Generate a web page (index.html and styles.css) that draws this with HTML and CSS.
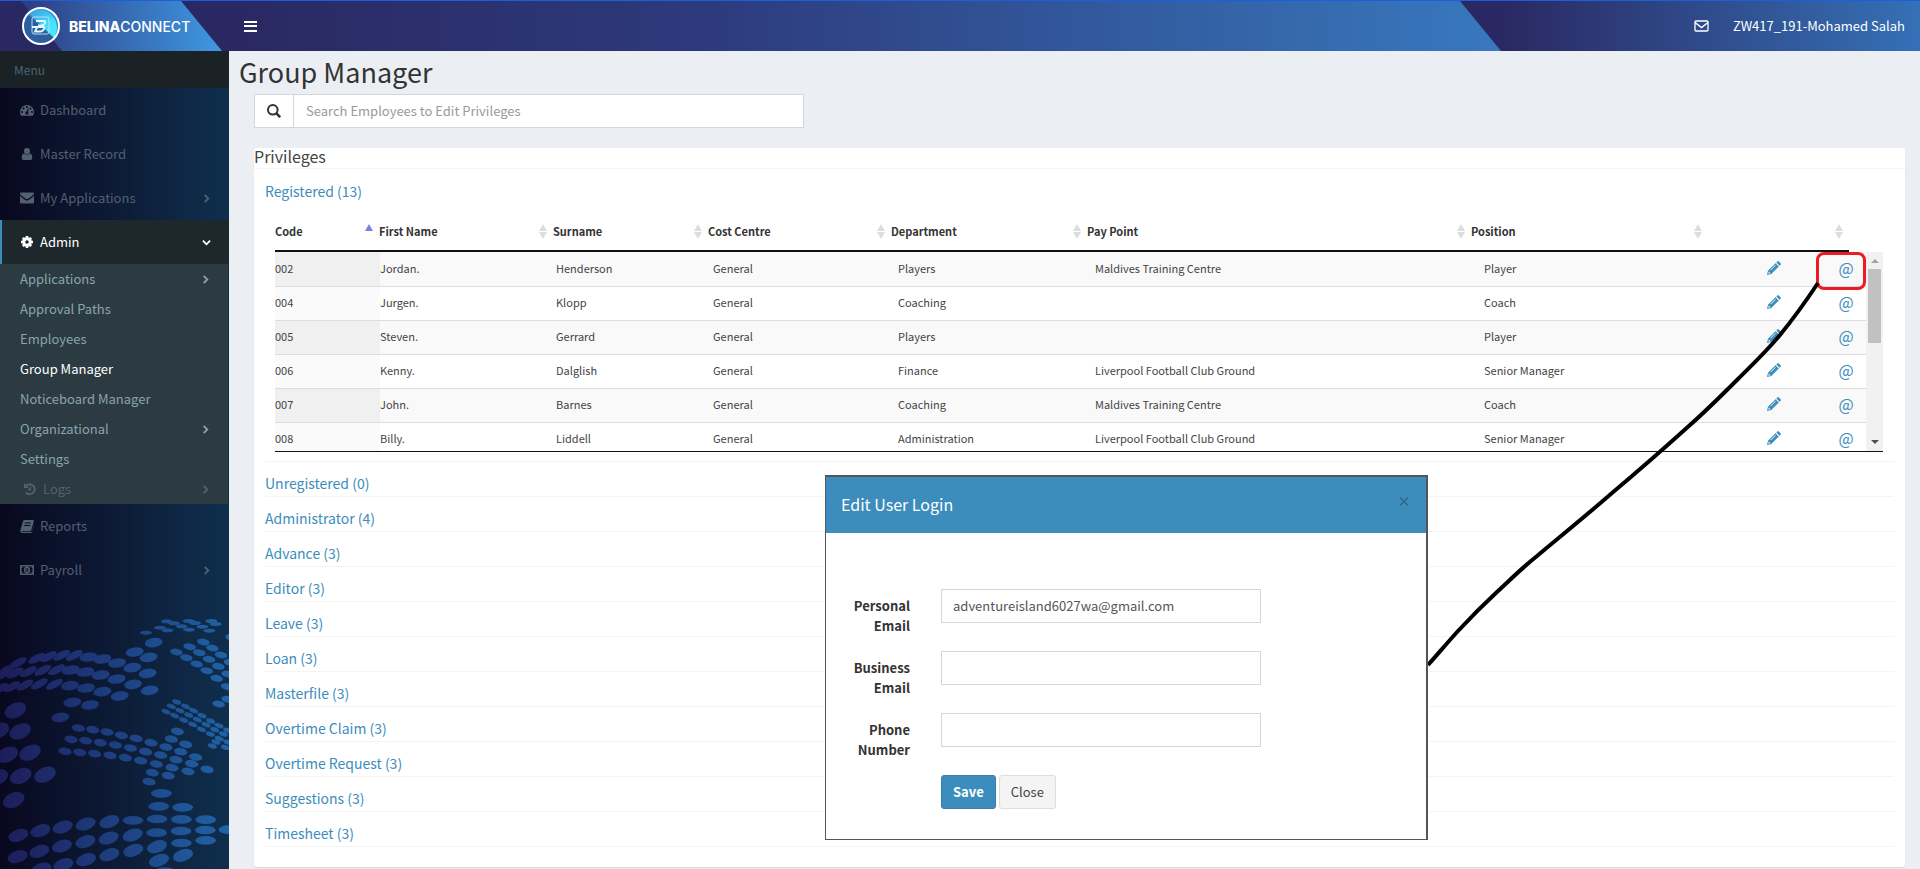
FILE: index.html
```html
<!DOCTYPE html>
<html lang="en">
<head>
    <meta charset="UTF-8">
    <meta name="viewport" content="width=device-width, initial-scale=1.0">
    <title>Group Manager</title>
    <link rel="stylesheet" href="styles.css">
</head>
<body>

    <header class="main-header">
        <a href="#" class="logo">
            <svg class="logo-mark" viewBox="0 0 40 40" aria-hidden="true">
                <defs>
                    <linearGradient id="markFill" x1="0" y1="0" x2="0" y2="1">
                        <stop offset="0" stop-color="#3aa0e4"/>
                        <stop offset="1" stop-color="#2c5596"/>
                    </linearGradient>
                    <linearGradient id="markGlow" x1="0" y1="0" x2="1" y2="1">
                        <stop offset="0" stop-color="#3a9be0"/>
                        <stop offset=".7" stop-color="#42e8ff"/>
                    </linearGradient>
                </defs>
                <circle cx="20" cy="20" r="18" fill="url(#markFill)"/>
                <path d="M7 8L33 33A18 18 0 0 1 7 32A18 18 0 0 1 7 8Z" fill="#2b5f9f"/>
                <path d="M8 7A18 18 0 0 1 33 32Z" fill="url(#markGlow)"/>
                <circle cx="20" cy="20" r="18" fill="none" stroke="#fff" stroke-width="2"/>
                <rect x="11" y="11" width="17" height="17" rx="2" fill="none" stroke="#b9dcf5" stroke-width="1"/>
                <path d="M15 15h8q2 0 1 2t-3 2.500h-4M11 21h11q2 0 1 2t-3 2.500h-6l2-4" fill="none" stroke="#e8f6ff" stroke-width="1.800"/>
            </svg>
            <span class="logo-text"><b>BELINA</b>CONNECT</span>
        </a>
        <nav class="navbar">
            <button type="button" class="nav-toggle" aria-label="Toggle navigation">
                <svg width="13" height="11" viewBox="0 0 13 11"><path d="M0 1h13M0 5h13M0 10h13" stroke="#fff" stroke-width="2"/></svg>
            </button>
            <div class="nav-right">
                <a href="#" aria-label="Messages">
                    <svg width="15" height="12" viewBox="0 0 15 12" fill="none" stroke="#fff"><rect x="1" y="1" width="13" height="10" rx="1" stroke-width="1.300"/><path d="M1 2.500l6.500 5 6.500-5" stroke-width="1.500"/></svg>
                </a>
                <a href="#">ZW417_191-Mohamed Salah</a>
            </div>
        </nav>
    </header>

    <div class="wrapper">
        <aside class="sidebar">
            <div class="menu-title">Menu</div>
            <ul class="menu">
                <li><a href="#">
                    <svg class="icon" viewBox="0 0 14 14"><path fill="currentColor" fill-rule="evenodd" d="M7 2a7 7 0 0 1 6.100 10.400q-.2.400-.7.400H1.600q-.5 0-.7-.4A7 7 0 0 1 7 2zM2 8a1 1 0 1 0 0 2 1 1 0 0 0 0-2zm1.500-3.500a1 1 0 1 0 0 2 1 1 0 0 0 0-2zM7 3a1 1 0 1 0 0 2 1 1 0 0 0 0-2zm3.500 1.500a1 1 0 1 0 0 2 1 1 0 0 0 0-2zM12 8a1 1 0 1 0 0 2 1 1 0 0 0 0-2zM8 5.500L6.600 8.600a1.500 1.500 0 1 0 1.300.3L8.800 5.800z"/></svg>
                    <span>Dashboard</span></a></li>
                <li><a href="#">
                    <svg class="icon" viewBox="0 0 14 14"><path fill="currentColor" d="M7 1a3 3 0 0 1 3 3.200Q10 7 7 7.500 4 7 4 4.200A3 3 0 0 1 7 1zM4 6.500q3 2.800 6 0 2.300.5 2.300 4 0 2.500-2 2.500H3.700q-2 0-2-2.500 0-3.500 2.300-4z"/></svg>
                    <span>Master Record</span></a></li>
                <li><a href="#">
                    <svg class="icon" viewBox="0 0 14 14"><path fill="currentColor" d="M1 1.500h12q1 0 1 1.200Q13 4.500 8.200 7.800q-1.200.8-2.400 0Q1 4.500 0 2.700 0 1.500 1 1.500zM0 4.700q2 2 5.300 4.200 1.700 1 3.400 0Q12 6.700 14 4.700V11.500q0 1-1 1H1q-1 0-1-1z"/></svg>
                    <span>My Applications</span>
                    <svg class="angle" viewBox="0 0 10 10"><path d="M3 1l4 4-4 4"/></svg></a></li>
                <li class="active"><a href="#">
                    <svg class="icon" viewBox="0 0 14 14"><circle cx="7" cy="7" r="3.300" fill="none" stroke="currentColor" stroke-width="3"/><path d="M7 1v2.500M7 10.500V13M1 7h2.500M10.500 7H13M2.800 2.800l1.700 1.700M9.500 9.500l1.700 1.700M2.800 11.200l1.700-1.700M9.500 4.500l1.700-1.700" stroke="currentColor" stroke-width="2.600"/></svg>
                    <span>Admin</span>
                    <svg class="angle" viewBox="0 0 10 10"><path d="M1 3l4 4 4-4"/></svg></a>
                    <ul class="submenu">
                        <li><a href="#"><span>Applications</span><svg class="angle" viewBox="0 0 10 10"><path d="M3 1l4 4-4 4"/></svg></a></li>
                        <li><a href="#">Approval Paths</a></li>
                        <li><a href="#">Employees</a></li>
                        <li><a href="#" class="current">Group Manager</a></li>
                        <li><a href="#">Noticeboard Manager</a></li>
                        <li><a href="#"><span>Organizational</span><svg class="angle" viewBox="0 0 10 10"><path d="M3 1l4 4-4 4"/></svg></a></li>
                        <li><a href="#">Settings</a></li>
                        <li><a href="#" class="muted">
                            <svg class="icon" viewBox="0 0 14 14" fill="none" stroke="currentColor"><path d="M2.800 4A5 5 0 1 1 3 10.500" stroke-width="2"/><path d="M1 1v5h5z" fill="currentColor" stroke="none"/><path d="M7.500 4.500v3H5" stroke-width="1.300"/></svg>
                            <span>Logs</span><svg class="angle" viewBox="0 0 10 10"><path d="M3 1l4 4-4 4"/></svg></a></li>
                    </ul>
                </li>
                <li><a href="#">
                    <svg class="icon" viewBox="0 0 14 14"><path fill="currentColor" fill-rule="evenodd" d="M4.500 1h8.700q.9.300.6 1.300L11.300 11q-.3 1-1.300 1H2.300q-.8.100-.8.800H11q.8 0 1.100-.9L14 5v1l-2 7q-.3 1-1.300 1H1.800Q0 13.500.3 11.500L3 2.300Q3.400 1 4.500 1zM5 3.500l-.3 1h6l.3-1zM4.400 6l-.3 1h6l.3-1z"/></svg>
                    <span>Reports</span></a></li>
                <li><a href="#">
                    <svg class="icon" viewBox="0 0 14 14" fill="none" stroke="currentColor"><rect x=".8" y="2.800" width="12.400" height="8.400" stroke-width="1.500"/><ellipse cx="7" cy="7" rx="2.300" ry="2.800" stroke-width="1.500"/><path d="M7 5.500v3M1 4.500h1.500M11.500 4.500H13M1 9.500h1.500M11.500 9.500H13"/></svg>
                    <span>Payroll</span>
                    <svg class="angle" viewBox="0 0 10 10"><path d="M3 1l4 4-4 4"/></svg></a></li>
            </ul>
            <!-- dotted world map -->
            <svg class="world" viewBox="0 351 687 756" aria-hidden="true">
                <defs>
                    <linearGradient id="mapFill" x1="0" x2="1" y1="0" y2="0">
                        <stop offset="0" stop-color="#1d1c58"/>
                        <stop offset=".5" stop-color="#1d3f80"/>
                        <stop offset="1" stop-color="#2063a5"/>
                    </linearGradient>
                    <marker id="flat" markerUnits="userSpaceOnUse" markerWidth="80" markerHeight="80" refX="40" refY="40"><ellipse cx="40" cy="40" rx="18" ry="6" fill="#fff"/></marker>
                    <marker id="lean" markerUnits="userSpaceOnUse" markerWidth="80" markerHeight="80" refX="40" refY="40"><ellipse cx="40" cy="40" rx="28" ry="11" fill="#fff" transform="rotate(-28 40 40)"/></marker>
                    <marker id="mid" markerUnits="userSpaceOnUse" markerWidth="80" markerHeight="80" refX="40" refY="40"><ellipse cx="40" cy="40" rx="27" ry="14" fill="#fff" transform="rotate(-8 40 40)"/></marker>
                    <marker id="big" markerUnits="userSpaceOnUse" markerWidth="80" markerHeight="80" refX="40" refY="40"><ellipse cx="40" cy="40" rx="34" ry="22" fill="#fff" transform="rotate(-25 40 40)"/></marker>
                    <marker id="east" markerUnits="userSpaceOnUse" markerWidth="80" markerHeight="80" refX="40" refY="40"><ellipse cx="40" cy="40" rx="19" ry="10" fill="#fff" transform="rotate(10 40 40)"/></marker>
                    <marker id="small" markerUnits="userSpaceOnUse" markerWidth="80" markerHeight="80" refX="40" refY="40"><ellipse cx="40" cy="40" rx="14" ry="7" fill="#fff" transform="rotate(20 40 40)"/></marker>
                    <marker id="centre" markerUnits="userSpaceOnUse" markerWidth="80" markerHeight="80" refX="40" refY="40"><ellipse cx="40" cy="40" rx="20" ry="11" fill="#fff" transform="rotate(10 40 40)"/></marker>
                    <marker id="wide" markerUnits="userSpaceOnUse" markerWidth="80" markerHeight="80" refX="40" refY="40"><ellipse cx="40" cy="40" rx="31" ry="13" fill="#fff"/></marker>
                    <marker id="south" markerUnits="userSpaceOnUse" markerWidth="80" markerHeight="80" refX="40" refY="40"><ellipse cx="40" cy="40" rx="31" ry="18" fill="#fff" transform="rotate(-18 40 40)"/></marker>
                    <mask id="dots" maskUnits="userSpaceOnUse" x="0" y="351" width="687" height="756">
                        <polyline class="dots-flat" points="500,364 566,363 634,363 522,370 585,369 647,372 480,383 545,379 607,380 438,398 503,391 567,389 628,392"/>
                        <polyline class="dots-lean" points="20,510 55,488 110,475 145,470 185,466 223,466 5,525 45,519 85,515 128,511 170,509 0,565 35,560 75,555 118,552 163,553"/>
                        <polyline class="dots-mid" points="461,428 404,456 446,472 265,471 307,477 351,489 397,503 443,520 212,510 256,516 302,525 350,537 399,553 449,571 210,557 258,564 307,575 359,588 217,607 270,615 181,652"/>
                        <polyline class="dots-big" points="46,631 60,694 -5,692 22,764 90,758 62,828 -8,832 135,824 41,900"/>
                        <polyline class="dots-east" points="529,456 569,440 610,426 559,473 598,458 637,444 590,492 627,478 663,465 620,512 655,499 690,487 650,535 683,522 682,560 656,612 683,598 695,412"/>
                        <polyline class="dots-small" points="530,606 557,619 581,632 606,647 632,663 657,677 683,691 514,619 540,632 566,645 592,659 618,674 644,689 670,702 498,635 524,647 551,660 578,673 604,688 631,702 658,716 684,727 637,738 648,726 676,742"/>
                        <polyline class="dots-centre" points="235,684 278,689 321,696 364,706 408,715 453,728 498,741 213,718 257,722 301,728 346,735 391,744 437,755 482,765 528,779 195,754 239,757 284,761 330,766 376,773 422,782 469,792 516,803 564,814 532,694 514,717 557,733 542,755 587,771 575,791 621,808 457,818 505,827 447,845"/>
                        <polyline class="dots-wide" points="484,880 476,919 548,922 399,961 471,957 544,958 617,959 687,989 616,990 543,993 470,998 617,1021 544,1029 495,1115"/>
                        <polyline class="dots-south" points="328,965 257,972 188,981 121,992 55,1006 398,1005 326,1014 256,1025 186,1038 118,1054 53,1070 471,1040 400,1051 328,1064 258,1079 190,1094 124,1107 549,1066 477,1081"/>
                    </mask>
                </defs>
                <rect x="0" y="351" width="687" height="756" fill="url(#mapFill)" mask="url(#dots)"/>
            </svg>
        </aside>

        <main class="content">
            <h1>Group Manager</h1>
            <form class="search">
                <button type="submit" aria-label="Search">
                    <svg width="14" height="14" viewBox="0 0 14 14" fill="none" stroke="#333"><circle cx="5.800" cy="5.800" r="4.800" stroke-width="2"/><path d="M9.200 9.200l4 4" stroke-width="2.600"/></svg>
                </button>
                <input type="text" aria-label="Search employees" placeholder="Search Employees to Edit Privileges">
            </form>

            <section class="box">
                <h2>Privileges</h2>
                <div class="groups">
                    <div class="group open">
                        <a href="#">Registered (13)</a>
                        <div class="grid-area">
                            <table class="grid-head">
                                <colgroup><col class="h-code"><col class="h-first"><col class="h-sur"><col class="h-cost"><col class="h-dept"><col class="h-pay"><col class="h-pos"><col class="h-act"></colgroup>
                                <thead>
                                    <tr>
                                        <th class="asc">Code</th>
                                        <th>First Name</th>
                                        <th>Surname</th>
                                        <th>Cost Centre</th>
                                        <th>Department</th>
                                        <th>Pay Point</th>
                                        <th>Position</th>
                                        <th></th>
                                    </tr>
                                </thead>
                            </table>
                            <div class="grid-scroll">
                                <table class="grid-body">
                                    <colgroup><col class="b-code"><col class="b-first"><col class="b-sur"><col class="b-cost"><col class="b-dept"><col class="b-pay"><col class="b-pos"><col class="b-edit"><col class="b-login"></colgroup>
                                    <tbody>
                                        <tr><td>002</td><td>Jordan.</td><td>Henderson</td><td>General</td><td>Players</td><td>Maldives Training Centre</td><td>Player</td><td><a href="#" class="edit" aria-label="Edit"><svg viewBox="0 0 14 14"><use href="#pencil"/></svg></a></td><td><a href="#" class="login">@</a></td></tr>
                                        <tr><td>004</td><td>Jurgen.</td><td>Klopp</td><td>General</td><td>Coaching</td><td></td><td>Coach</td><td><a href="#" class="edit" aria-label="Edit"><svg viewBox="0 0 14 14"><use href="#pencil"/></svg></a></td><td><a href="#" class="login">@</a></td></tr>
                                        <tr><td>005</td><td>Steven.</td><td>Gerrard</td><td>General</td><td>Players</td><td></td><td>Player</td><td><a href="#" class="edit" aria-label="Edit"><svg viewBox="0 0 14 14"><use href="#pencil"/></svg></a></td><td><a href="#" class="login">@</a></td></tr>
                                        <tr><td>006</td><td>Kenny.</td><td>Dalglish</td><td>General</td><td>Finance</td><td>Liverpool Football Club Ground</td><td>Senior Manager</td><td><a href="#" class="edit" aria-label="Edit"><svg viewBox="0 0 14 14"><use href="#pencil"/></svg></a></td><td><a href="#" class="login">@</a></td></tr>
                                        <tr><td>007</td><td>John.</td><td>Barnes</td><td>General</td><td>Coaching</td><td>Maldives Training Centre</td><td>Coach</td><td><a href="#" class="edit" aria-label="Edit"><svg viewBox="0 0 14 14"><use href="#pencil"/></svg></a></td><td><a href="#" class="login">@</a></td></tr>
                                        <tr><td>008</td><td>Billy.</td><td>Liddell</td><td>General</td><td>Administration</td><td>Liverpool Football Club Ground</td><td>Senior Manager</td><td><a href="#" class="edit" aria-label="Edit"><svg viewBox="0 0 14 14"><use href="#pencil"/></svg></a></td><td><a href="#" class="login">@</a></td></tr>
                                    </tbody>
                                </table>
                                <div class="scrollbar">
                                    <span class="arrow-up"></span>
                                    <span class="thumb"></span>
                                    <span class="arrow-down"></span>
                                </div>
                                <div class="marker"></div>
                            </div>
                        </div>
                    </div>
                    <div class="group"><a href="#">Unregistered (0)</a></div>
                    <div class="group"><a href="#">Administrator (4)</a></div>
                    <div class="group"><a href="#">Advance (3)</a></div>
                    <div class="group"><a href="#">Editor (3)</a></div>
                    <div class="group"><a href="#">Leave (3)</a></div>
                    <div class="group"><a href="#">Loan (3)</a></div>
                    <div class="group"><a href="#">Masterfile (3)</a></div>
                    <div class="group"><a href="#">Overtime Claim (3)</a></div>
                    <div class="group"><a href="#">Overtime Request (3)</a></div>
                    <div class="group"><a href="#">Suggestions (3)</a></div>
                    <div class="group"><a href="#">Timesheet (3)</a></div>
                </div>
            </section>
        </main>
    </div>

    <svg class="pointer" viewBox="1420 275 406 396" aria-hidden="true">
        <path d="M1818 283C1806 301 1794 318 1780 335C1766 352 1753 364 1738 379C1722 395 1707 410 1690 425C1670 443 1637 472 1612 493C1588 514 1562 535 1537 556C1522 568 1511 579 1498 591C1484 604 1471 617 1458 631C1447 643 1438 654 1428 665"/>
    </svg>

    <div class="modal" role="dialog" aria-labelledby="modalTitle">
        <div class="modal-header">
            <h3 id="modalTitle">Edit User Login</h3>
            <button type="button" class="modal-x" aria-label="Close">×</button>
        </div>
        <form class="modal-body">
            <div class="form-row">
                <label for="personalEmail">Personal Email</label>
                <input type="text" id="personalEmail" value="adventureisland6027wa@gmail.com">
            </div>
            <div class="form-row">
                <label for="businessEmail">Business Email</label>
                <input type="text" id="businessEmail">
            </div>
            <div class="form-row">
                <label for="phone">Phone Number</label>
                <input type="text" id="phone">
            </div>
            <div class="form-actions">
                <button type="button" class="btn btn-primary">Save</button>
                <button type="button" class="btn">Close</button>
            </div>
        </form>
    </div>

    <svg class="symbols" aria-hidden="true">
        <symbol id="pencil" viewBox="0 0 14 14">
            <path fill="#3c8dbc" fill-rule="evenodd" d="M0 14l1-4.300L8.500 2.200l3.300 3.300L4.300 13zM1.800 10.500l-.5 2.200 2.200-.5zM9.300 1.400L10.300.4q.7-.7 1.500 0l1.800 1.800q.7.800 0 1.500l-1 1zM8.300 4L3.500 8.800l.4.400L8.700 4.400z"/>
        </symbol>
    </svg>

</body>
</html>
```
FILE: styles.css
```css
:root {
    --blue: #3c8dbc;
    --line: #f4f4f4;
    --field: #d2d6de;
    --page: #ebeff4;
}

* {
    box-sizing: border-box;
}

body {
    position: relative;
    margin: 0;
    min-height: 100vh;
    display: flex;
    flex-direction: column;
    font-family: "Noto Sans CJK SC", "Open Sans", sans-serif;
    font-size: 13px;
    line-height: 20px;
    color: #333;
    background: var(--page);
}

a {
    color: var(--blue);
    text-decoration: none;
}

ul {
    list-style: none;
    margin: 0;
    padding: 0;
}

h1, h2, h3 {
    margin: 0;
    font-weight: 400;
}

button, input {
    font: inherit;
}

/* header */
.main-header {
    display: flex;
    height: 51px;
    border-top: 1px solid #1a5fdc;
    background: #2a2862;
}

.logo {
    display: flex;
    align-items: center;
    gap: 8px;
    width: 229px;
    padding-left: 21px;
    color: #fff;
    background: linear-gradient(90deg, #2b3276, #3f97e2 220px);
    clip-path: polygon(21px 0, 181px 0, 222px 100%, 62px 100%, 0 100%, 0 0);
    position: relative;
}

.logo::before {
    content: "";
    position: absolute;
    left: 0;
    top: 0;
    width: 62px;
    height: 100%;
    background: #2a2862;
    clip-path: polygon(0 0, 21px 0, 62px 100%, 0 100%);
}

.logo-mark {
    position: relative;
    width: 40px;
    height: 40px;
    flex: none;
}

.logo-text {
    padding-top: 2px;
    font-family: Inter, sans-serif;
    font-size: 14px;
    font-weight: 500;
}

.logo-text b {
    font-weight: 800;
}

.navbar {
    flex: 1;
    display: flex;
    align-items: center;
    justify-content: space-between;
    padding: 0 15px;
    background: linear-gradient(90deg, #2a2862, #2d3a7c 28%, #3878be 75%);
    position: relative;
}

.navbar::after {
    content: "";
    position: absolute;
    top: 0;
    right: 0;
    width: 460px;
    height: 100%;
    background: linear-gradient(90deg, #2a2862 40px, #3570b6);
    clip-path: polygon(0 0, 100% 0, 100% 100%, 41px 100%);
}

.nav-toggle {
    display: flex;
    padding: 0;
    border: 0;
    background: none;
}

.nav-right {
    position: relative;
    z-index: 1;
    display: flex;
    align-items: center;
    gap: 24px;
}

.nav-right a {
    display: flex;
    color: #fff;
}

/* sidebar */
.wrapper {
    flex: 1;
    display: flex;
}

.sidebar {
    width: 229px;
    flex: none;
    display: flex;
    flex-direction: column;
    background: linear-gradient(90deg, #08081f, #0d1b36 50%, #0f2f4d);
}

.menu-title {
    height: 37px;
    padding: 9px 14px;
    font-size: 12px;
    color: #4b646f;
    background: #1a2226;
}

.menu a {
    display: flex;
    align-items: center;
    gap: 6px;
    height: 44px;
    padding: 0 18px 0 20px;
    color: #52606f;
}

.menu span {
    flex: 1;
}

.menu .active > a {
    padding-left: 18px;
    color: #fff;
    background: #1e282c;
    border-left: 2px solid var(--blue);
}

.icon {
    width: 14px;
    height: 14px;
    flex: none;
}

.angle {
    width: 9px;
    height: 9px;
    fill: none;
    stroke: currentColor;
    stroke-width: 2;
}

.submenu {
    margin-right: 1px;
    background: #2c3b41;
}

.menu .submenu a {
    height: 30px;
    color: #8aa4af;
}

.menu .submenu .current {
    color: #fff;
}

.menu .submenu .muted {
    padding-left: 23px;
    color: #50636b;
}

.world {
    display: block;
    width: 100%;
    margin-top: auto;
}

.world polyline {
    fill: none;
}

.dots-flat { marker: url(#flat); }
.dots-lean { marker: url(#lean); }
.dots-mid { marker: url(#mid); }
.dots-big { marker: url(#big); }
.dots-east { marker: url(#east); }
.dots-small { marker: url(#small); }
.dots-centre { marker: url(#centre); }
.dots-wide { marker: url(#wide); }
.dots-south { marker: url(#south); }

/* content */
.content {
    flex: 1;
    min-width: 0;
    padding: 1px 15px 0 25px;
}

h1 {
    margin-left: -15px;
    padding-bottom: 2px;
    font-size: 27px;
    line-height: 40px;
}

.search {
    display: flex;
    width: 550px;
    height: 34px;
    border: 1px solid var(--field);
    background: #fff;
}

.search button {
    display: flex;
    align-items: center;
    justify-content: center;
    width: 39px;
    padding: 0;
    border: 0;
    border-right: 1px solid var(--field);
    background: #fff;
}

.search input {
    flex: 1;
    padding: 0 12px;
    border: 0;
    color: #555;
}

.search input::placeholder {
    color: #999;
}

.box {
    margin-top: 20px;
    padding-bottom: 20px;
    border-radius: 3px;
    background: #fff;
    box-shadow: 0 1px 1px rgba(0, 0, 0, 0.1);
}

h2 {
    padding-bottom: 4px;
    font-size: 16px;
    line-height: 16px;
    color: #444;
    border-bottom: 1px solid var(--line);
}

.groups {
    padding: 0 10px;
}

.group {
    height: 35px;
    padding: 11px 1px 0;
    font-size: 14px;
    line-height: 20px;
    border-bottom: 1px solid var(--line);
    border-radius: 3px;
}

.group.open {
    height: auto;
    padding: 12px 1px 9px;
}

.group > a {
    display: block;
}

.grid-area {
    padding: 12px 11px 0 10px;
    font-size: 11px;
}

table {
    width: 100%;
    border-collapse: collapse;
    table-layout: fixed;
}

.grid-head {
    width: calc(100% - 34px);
    border-bottom: 2px solid #111;
}

.h-code { width: 104px; }
.h-first { width: 174px; }
.h-sur { width: 155px; }
.h-cost { width: 183px; }
.h-dept { width: 196px; }
.h-pay { width: 384px; }
.h-pos { width: 237px; }
.h-act { width: 141px; }

th {
    position: relative;
    height: 38px;
    padding: 0 0 2px;
    text-align: left;
}

/* sort arrows */
th::before,
th::after {
    content: "";
    position: absolute;
    right: 6px;
    border: 4px solid transparent;
}

th::before {
    top: 11px;
    border-top: 0;
    border-bottom: 7px solid #ddd;
}

th::after {
    top: 19px;
    border-bottom: 0;
    border-top: 7px solid #ddd;
}

th.asc::before {
    border-bottom-color: #8080e0;
}

th.asc::after {
    display: none;
}

.grid-scroll {
    position: relative;
    display: flex;
    align-items: flex-start;
    height: 200px;
    overflow: hidden;
    border-bottom: 1px solid #111;
}

.grid-body {
    flex: 1;
}

.b-code { width: 105px; }
.b-first { width: 176px; }
.b-sur { width: 157px; }
.b-cost { width: 185px; }
.b-dept { width: 197px; }
.b-pay { width: 389px; }
.b-pos { width: 240px; }
.b-edit { width: 100px; }
.b-login { width: 42px; }

.grid-body tr {
    height: 34px;
}

.grid-body tr:not(:last-child) {
    border-bottom: 1px solid #ddd;
}

.grid-body tr:nth-child(odd) {
    background: #f9f9f9;
}

.grid-body td {
    padding: 0 0 2px;
    color: #444;
}

.grid-body td:first-child {
    background: #fafafa;
}

.grid-body tr:nth-child(odd) td:first-child {
    background: #f0f0f0;
}

.grid-body td:nth-child(n+8) {
    text-align: center;
}

.edit svg {
    display: block;
    width: 14px;
    height: 14px;
    margin: 0 auto;
}

.login {
    display: block;
    padding-left: 2px;
    font-size: 16px;
    line-height: 14px;
}

.scrollbar {
    width: 17px;
    height: 100%;
    display: flex;
    flex-direction: column;
    align-items: center;
    background: #f1f1f1;
}

.arrow-up {
    margin: 7px 0 6px;
    border: 4px solid transparent;
    border-top: 0;
    border-bottom-color: #a3a3a3;
}

.thumb {
    width: 13px;
    height: 74px;
    background: #c1c1c1;
}

.arrow-down {
    margin: auto 0 7px;
    border: 4px solid transparent;
    border-bottom: 0;
    border-top-color: #505050;
}

/* annotation over the first login link */
.marker {
    position: absolute;
    top: 0;
    right: 17px;
    width: 50px;
    height: 38px;
    border: 3px solid #ed1c24;
    border-radius: 8px;
}

.pointer {
    position: absolute;
    top: 275px;
    right: 94px;
    width: 406px;
    height: 396px;
    fill: none;
    stroke: #000;
    stroke-width: 4;
    pointer-events: none;
}

/* login dialog */
.modal {
    position: absolute;
    top: 475px;
    right: 492px;
    width: 603px;
    border: 1px solid #555;
    border-width: 2px 2px 1px 1px;
    background: #fff;
}

.modal-header {
    display: flex;
    justify-content: space-between;
    align-items: flex-start;
    height: 56px;
    padding: 17px 15px 0;
    color: #fff;
    background: var(--blue);
}

.modal-header h3 {
    font-size: 16px;
}

.modal-x {
    padding: 0;
    border: 0;
    background: none;
    color: #2c6a8e;
    font-size: 14px;
    font-weight: 700;
    line-height: 12px;
}

.modal-body {
    display: flex;
    flex-direction: column;
    gap: 28px;
    padding: 56px 15px 30px;
}

.form-row {
    display: flex;
    gap: 31px;
    height: 34px;
}

.form-row label {
    width: 69px;
    padding-top: 7px;
    font-weight: 700;
    text-align: right;
}

.form-row input {
    width: 320px;
    padding: 0 11px;
    border: 1px solid var(--field);
    background: #fff;
    color: #555;
}

.form-actions {
    display: flex;
    gap: 3px;
    margin-left: 100px;
}

.btn {
    height: 34px;
    padding: 0 11px;
    border: 1px solid #ddd;
    border-radius: 3px;
    background: #f4f4f4;
    color: #444;
}

.btn-primary {
    border-color: #367fa9;
    background: var(--blue);
    color: #fff;
    font-weight: 700;
}

.symbols {
    position: absolute;
    width: 0;
    height: 0;
}
```
